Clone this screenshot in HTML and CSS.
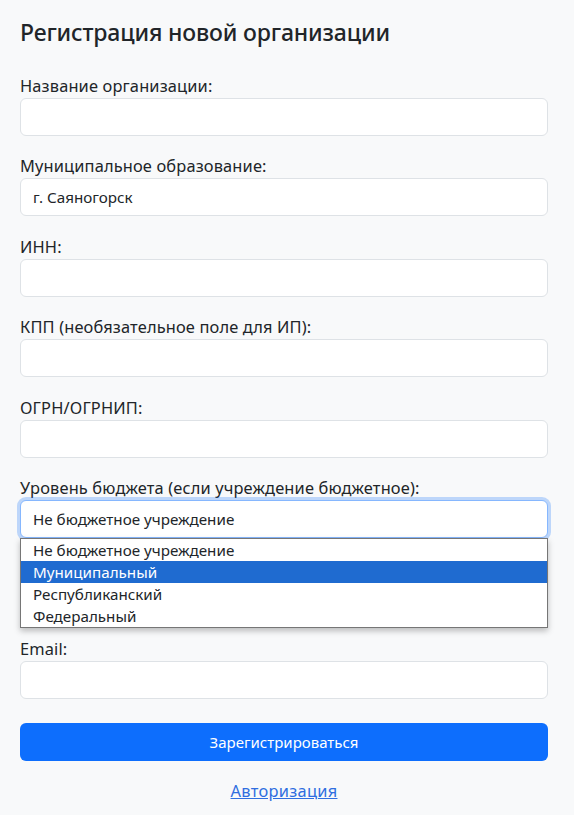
FILE: index.html
```html
<!DOCTYPE html>
<html lang="ru">
<head>
<meta charset="utf-8">
<title>Регистрация новой организации</title>
<link rel="stylesheet" href="styles.css">
</head>
<body>
<main class="page">
  <h3 class="title">Регистрация новой организации</h3>
  <form class="form">
    <div class="group">
      <label class="label">Название организации:</label>
      <input class="control" type="text">
    </div>
    <div class="group">
      <label class="label">Муниципальное образование:</label>
      <div class="control value">г. Саяногорск</div>
    </div>
    <div class="group">
      <label class="label">ИНН:</label>
      <input class="control" type="text">
    </div>
    <div class="group">
      <label class="label">КПП (необязательное поле для ИП):</label>
      <input class="control" type="text">
    </div>
    <div class="group">
      <label class="label">ОГРН/ОГРНИП:</label>
      <input class="control" type="text">
    </div>
    <div class="group">
      <label class="label">Уровень бюджета (если учреждение бюджетное):</label>
      <div class="select-wrap">
        <div class="control value select focused">Не бюджетное учреждение</div>
        <ul class="dropdown">
          <li class="option">Не бюджетное учреждение</li>
          <li class="option active">Муниципальный</li>
          <li class="option">Республиканский</li>
          <li class="option">Федеральный</li>
        </ul>
      </div>
    </div>
    <div class="group">
      <label class="label covered">Телефон:</label>
      <input class="control" type="text">
    </div>
    <div class="group">
      <label class="label">Email:</label>
      <input class="control" type="text">
    </div>
    <button class="btn" type="button">Зарегистрироваться</button>
    <div class="links"><a class="link" href="#">Авторизация</a></div>
  </form>
</main>
</body>
</html>
```

FILE: styles.css
```css
* { box-sizing: border-box; }
html, body { margin: 0; }
body {
  background: #f8f9fa;
  font-family: "Noto Sans", "Open Sans", sans-serif;
  color: #212529;
}
.page {
  padding: 18px 26px 0 20px;
}
.title {
  margin: 0 0 27px;
  font-size: 23px;
  font-weight: 500;
  line-height: 29px;
  letter-spacing: -0.15px;
}
.form { display: flex; flex-direction: column; }
.group { display: flex; flex-direction: column; margin-bottom: 18.4px; }
.label {
  font-size: 16.4px;
  line-height: 24px;
  letter-spacing: 0.15px;
}
.covered { visibility: hidden; }
.control {
  display: block;
  width: 100%;
  height: 38px;
  border: 1px solid #dee2e6;
  border-radius: 6px;
  background: #fff;
  padding: 0 12px;
  font-family: inherit;
  font-size: 15.2px;
  color: #212529;
}
.value {
  display: flex;
  align-items: center;
}
.select-wrap { position: relative; }
.focused {
  border-color: #86b7fe;
  box-shadow: 0 0 0 3px rgba(13, 110, 253, 0.25);
}
.dropdown {
  position: absolute;
  left: 0;
  right: 0;
  top: 38px;
  margin: 0;
  padding: 0;
  list-style: none;
  background: #fff;
  border: 1px solid #767676;
  box-shadow: 0 3px 6px rgba(0, 0, 0, 0.25);
  z-index: 5;
}
.option {
  height: 22px;
  line-height: 22px;
  padding-left: 12px;
  font-size: 15.2px;
  color: #212529;
}
.option.active {
  background: #1f6bd0;
  color: #fff;
}
.btn {
  margin-top: 6px;
  height: 38px;
  border: none;
  border-radius: 6px;
  background: #0d6efd;
  color: #fff;
  font-family: inherit;
  font-size: 15px;
}
.links {
  text-align: center;
  margin-top: 18px;
  line-height: 24px;
}
.link {
  color: #2f6ee0;
  font-size: 16.4px;
  letter-spacing: 0.3px;
  text-decoration: underline;
}
```
